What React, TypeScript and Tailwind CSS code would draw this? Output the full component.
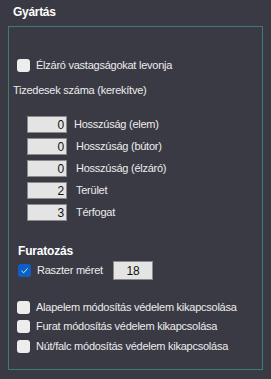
import { ReactNode } from 'react';

function CheckBox({ checked = false }: { checked?: boolean }) {
  if (checked) {
    return (
      <span className="flex h-[13px] w-[13px] shrink-0 items-center justify-center rounded-[3px] bg-[#0b5fc6]">
        <svg width="9" height="9" viewBox="0 0 9 9" fill="none">
          <path d="M1.5 4.8 L3.6 6.8 L7.6 2.4" stroke="#dfe8f5" strokeWidth="1" />
        </svg>
      </span>
    );
  }
  return <span className="block h-[13px] w-[13px] shrink-0 rounded-[3px] bg-[#ededed]" />;
}

function CheckRow({ label, className = '' }: { label: string; className?: string }) {
  return (
    <div className={`flex h-[16px] items-center pl-[8px] ${className}`}>
      <CheckBox />
      <span className="ml-[6px]">{label}</span>
    </div>
  );
}

function NumberRow({ value, children, labelGap }: { value: string; children: ReactNode; labelGap: string }) {
  return (
    <div className="flex h-[17px] items-center pl-[18px]">
      <div className="flex h-[17px] w-[40px] items-center justify-end border border-[#8a8a8a] bg-[#e4e4e4] pr-[2px] text-[12px] text-[#111]">
        {value}
      </div>
      <span className={labelGap}>{children}</span>
    </div>
  );
}

export default function App() {
  return (
    <div
      className="h-[379px] w-[271px] overflow-hidden bg-[#3a3a44] text-[11px] tracking-[-0.25px] text-[#ececec]"
      style={{ fontFamily: '"Liberation Sans", Arial, sans-serif' }}
    >
      {/* Fejléc */}
      <div className="flex h-[26px] items-center pb-[3px] pl-[13px] text-[12px] font-bold tracking-[-0.3px] text-white">
        Gyártás
      </div>

      {/* Keret */}
      <div className="ml-[8px] h-[344px] w-[255px] border border-[#3f7b73]">
        <CheckRow label="Élzáró vastagságokat levonja" className="mt-[30px]" />

        <div className="mt-[9px] flex h-[16px] items-center pl-[4px]">Tizedesek száma (kerekítve)</div>

        <div className="mt-[18px] flex flex-col gap-[5px]">
          <NumberRow value="0" labelGap="ml-[7px]">Hosszúság (elem)</NumberRow>
          <NumberRow value="0" labelGap="ml-[9px]">Hosszúság (bútor)</NumberRow>
          <NumberRow value="0" labelGap="ml-[9px]">Hosszúság (élzáró)</NumberRow>
          <NumberRow value="2" labelGap="ml-[9px]">Terület</NumberRow>
          <NumberRow value="3" labelGap="ml-[9px]">Térfogat</NumberRow>
        </div>

        <div className="mt-[22px] flex h-[16px] items-center pl-[9px] text-[12px] font-bold tracking-[-0.2px] text-white">
          Furatozás
        </div>

        <div className="mt-[2px] flex h-[19px] items-center pl-[9px]">
          <CheckBox checked />
          <span className="ml-[6px]">Raszter méret</span>
          <div className="ml-auto mr-[109px] flex h-[19px] w-[40px] items-center justify-center border border-[#8a8a8a] bg-[#e4e4e4] text-[12px] text-[#111]">
            18
          </div>
        </div>

        <CheckRow label="Alapelem módosítás védelem kikapcsolása" className="mt-[19px]" />
        <CheckRow label="Furat módosítás védelem kikapcsolása" className="mt-[3px]" />
        <CheckRow label="Nút/falc módosítás védelem kikapcsolása" className="mt-[4px]" />
      </div>
    </div>
  );
}
